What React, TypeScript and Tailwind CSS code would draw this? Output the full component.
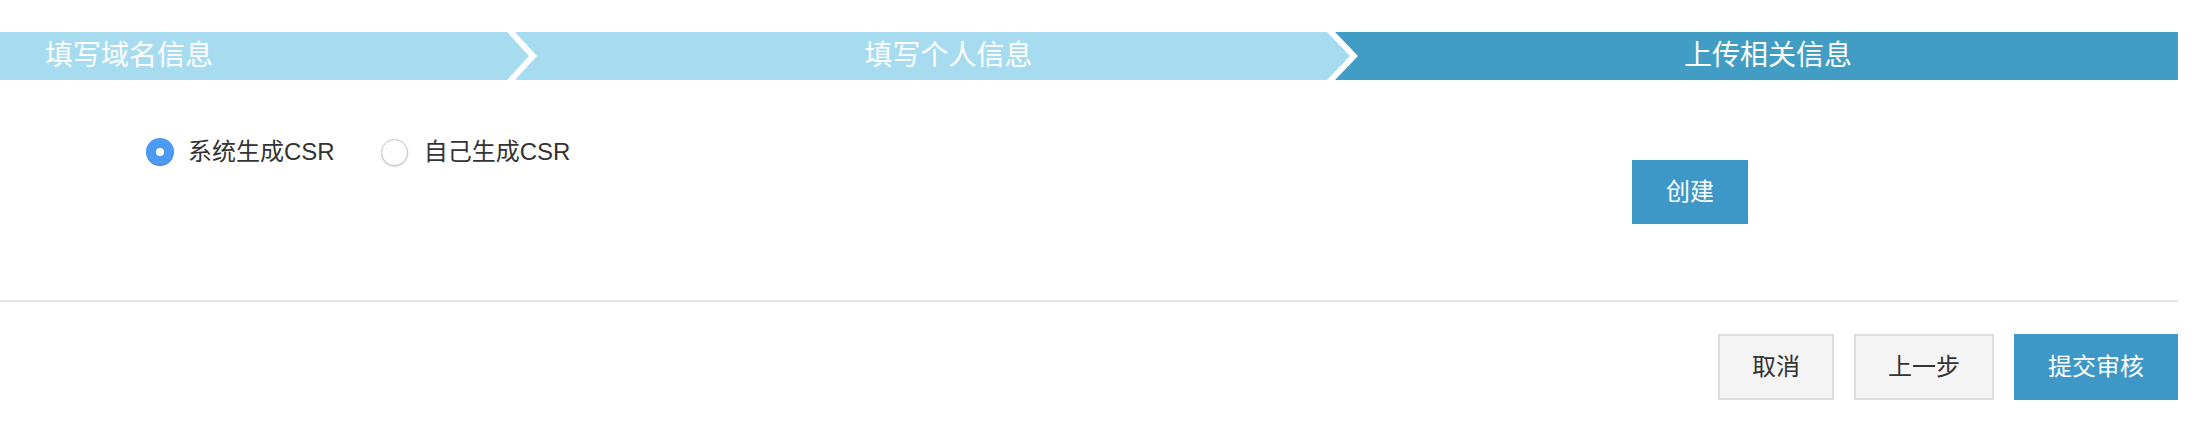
import React from "react";

const font = { fontFamily: '"Liberation Sans", "Noto Sans CJK SC", sans-serif' };

export default function App() {
  return (
    <div
      className="w-[2194px] h-[430px] overflow-hidden bg-white pt-[32px] pr-[16px] text-[#333333]"
      style={font}
    >
      {/* steps bar */}
      <div className="flex h-[48px] w-[2178px]">
        <div className="w-[529px] h-full bg-[#a6dbf0] [clip-path:polygon(0_0,507px_0,100%_50%,507px_100%,0_100%)] flex items-center pl-[45px] text-white text-[28px]">
          填写域名信息
        </div>
        <div className="w-[835px] -ml-[14px] h-full bg-[#a6dbf0] [clip-path:polygon(0_0,812px_0,100%_50%,812px_100%,0_100%,22px_50%)] flex items-center justify-center pl-[32px] text-white text-[28px]">
          填写个人信息
        </div>
        <div className="flex-1 -ml-[15px] h-full bg-[#429dc5] [clip-path:polygon(0_0,100%_0,100%_100%,0_100%,23px_50%)] flex items-center justify-center pl-[23px] text-white text-[28px]">
          上传相关信息
        </div>
      </div>

      {/* content */}
      <div className="flex h-[220px] items-start">
        <div className="w-[1632px] flex items-center pl-[146px] pt-[58px]">
          <label className="flex items-center">
            <span className="w-[28px] h-[28px] rounded-full bg-[#4d9af3] flex items-center justify-center shadow-[inset_0_-1px_2px_rgba(0,0,0,0.15)]">
              <span className="w-[8px] h-[8px] rounded-full bg-white" />
            </span>
            <span className="ml-[14px] text-[24px] leading-[28px]">系统生成CSR</span>
          </label>
          <label className="flex items-center ml-[46px]">
            <span className="w-[27px] h-[27px] rounded-full bg-white border border-[#c4c4c4] shadow-[0_1px_2px_rgba(0,0,0,0.15)]" />
            <span className="ml-[16px] text-[24px] leading-[28px]">自己生成CSR</span>
          </label>
        </div>
        <button className="mt-[80px] w-[116px] h-[64px] bg-[#3e98c7] text-white text-[24px] flex items-center justify-center">
          创建
        </button>
      </div>

      {/* divider */}
      <div className="h-[2px] w-[2178px] bg-[#e3e4e8]" />

      {/* footer buttons */}
      <div className="flex justify-end gap-[20px] mt-[32px] w-[2178px]">
        <button className="w-[116px] h-[66px] bg-[#f5f5f5] border-2 border-[#dddddd] text-[24px] text-[#333333] flex items-center justify-center">
          取消
        </button>
        <button className="w-[140px] h-[66px] bg-[#f5f5f5] border-2 border-[#dddddd] text-[24px] text-[#333333] flex items-center justify-center">
          上一步
        </button>
        <button className="w-[164px] h-[66px] bg-[#3e98c7] text-[24px] text-white flex items-center justify-center">
          提交审核
        </button>
      </div>
    </div>
  );
}
